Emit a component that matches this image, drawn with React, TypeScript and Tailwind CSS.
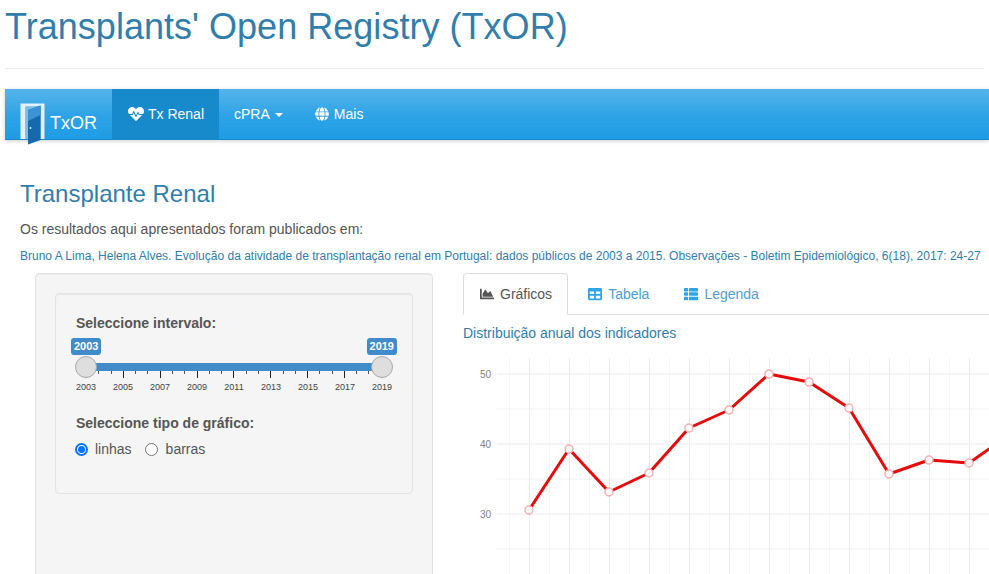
import { FaChartArea, FaGlobe, FaHeartbeat, FaTable, FaThList } from 'react-icons/fa'

const YEARS = [2003, 2005, 2007, 2009, 2011, 2013, 2015, 2017, 2019]
const PTS: [number, number][] = [
  [66, 152], [106, 91], [146, 134], [186, 115], [226, 70], [266, 52], [306, 16],
  [346, 24], [386, 50], [426, 116], [466, 102], [506, 105], [546, 77],
]

function Door() {
  return (
    <svg width="25" height="42" viewBox="0 0 25 42" className="shrink-0">
      <path d="M0.5 0.5 H24.5 V36 H20.5 V3.5 H5.5 V36 H0.5 Z" fill="#e4f1fa" />
      <path d="M5.5 3.5 H20.5 V36 H5.5 Z" fill="#7fbde8" />
      <path d="M8 7 L20.5 2.5 V37 L8 41.5 Z" fill="#1569ad" />
      <path d="M8 7 L20.5 2.5 V12 L8 18 Z" fill="#3b93d6" />
      <circle cx="10.5" cy="25" r="0.9" fill="#e6f6ff" />
    </svg>
  )
}

function NavItem({ active, children }: { active?: boolean; children: React.ReactNode }) {
  return (
    <a className={`flex items-center h-full px-[15px] text-[14px] text-white ${active ? 'bg-[#178acc]' : ''}`}>
      <span className="flex items-center">{children}</span>
    </a>
  )
}

function RangeSlider() {
  return (
    <div className="mt-[5px] w-[326px] -ml-[5px]">
      <div className="flex justify-between">
        <span className="bg-[#428bca] text-white text-[11px] leading-[13px] font-bold px-[3px] py-[2px] rounded-[3px]">2003</span>
        <span className="bg-[#428bca] text-white text-[11px] leading-[13px] font-bold px-[3px] py-[2px] rounded-[3px]">2019</span>
      </div>
      <div className="relative h-[16px]">
        <div className="mx-[15px] relative top-[8px] h-[8px] bg-[#428bca]" />
        <span className="absolute left-[4px] top-[1px] w-[22px] h-[22px] rounded-full bg-[#dedede] border border-[#aaaaaa]" />
        <span className="absolute right-[4px] top-[1px] w-[22px] h-[22px] rounded-full bg-[#dedede] border border-[#aaaaaa]" />
      </div>
      <div className="mx-[15px] h-[7px] flex justify-between">
        {Array.from({ length: 25 }).map((_, i) => (
          <span key={i} className={`w-px ${i % 3 === 0 ? 'h-[7px] bg-[#222222]' : 'h-[3px] bg-[#555555]'}`} />
        ))}
      </div>
      <div className="-mx-[1px] flex justify-between text-[9px] leading-[12px] text-[#444444] mt-[3px]">
        {YEARS.map(y => <span key={y} className="w-[32px] text-center">{y}</span>)}
      </div>
    </div>
  )
}

function Chart() {
  const line = PTS.map(p => p.join(',')).join(' ')
  return (
    <svg width="526" height="216" className="block mt-[15px]" style={{ fontFamily: '"Liberation Sans", sans-serif' }}>
      {[16, 86, 156].map(y => <line key={y} x1="34" x2="526" y1={y} y2={y} stroke="#ebebeb" />)}
      {[51, 121, 191].map(y => <line key={y} x1="34" x2="526" y1={y} y2={y} stroke="#f3f3f3" />)}
      {Array.from({ length: 13 }).map((_, i) => (
        <line key={i} x1={66.5 + i * 40} x2={66.5 + i * 40} y1="0" y2="216" stroke="#ebebeb" />
      ))}
      {Array.from({ length: 13 }).map((_, i) => (
        <line key={i} x1={46.5 + i * 40} x2={46.5 + i * 40} y1="0" y2="216" stroke="#f5f5f5" />
      ))}
      <text x="28" y="19.5" textAnchor="end" fontSize="10" fill="#7f7f7f">50</text>
      <text x="28" y="89.5" textAnchor="end" fontSize="10" fill="#7f7f7f">40</text>
      <text x="28" y="159.5" textAnchor="end" fontSize="10" fill="#7f7f7f">30</text>
      <polyline points={line} fill="none" stroke="#e60a0a" strokeWidth="3" strokeLinejoin="round" />
      {PTS.map(([x, y]) => (
        <circle key={x} cx={x} cy={y} r="4" fill="#fff8f8" stroke="#f7aeb0" strokeWidth="1.4" />
      ))}
    </svg>
  )
}

export default function App() {
  return (
    <div className="h-[574px] overflow-hidden bg-white px-[5px] text-[#555555] font-['Liberation_Sans',Arial,sans-serif]">
      <h1 className="text-[36px] leading-[40px] text-[#317eac] pt-[7px] tracking-[0.03px]">Transplants' Open Registry (TxOR)</h1>
      <div className="mt-[21px] border-t border-[#eeeeee]" />

      <nav className="mt-[20px] h-[51px] flex w-[calc(100%+5px)] bg-gradient-to-b from-[#54b4eb] via-[#2fa4e7] to-[#1d9ce5] shadow-[0_1px_4px_rgba(0,0,0,0.2)] border-b border-[#178acc]">
        <div className="w-[107px] flex items-end pl-[15px]">
          <span className="relative top-[6px] flex items-end">
            <Door />
            <span className="text-[18px] leading-[20px] text-white ml-[5px] mb-[12px]">TxOR</span>
          </span>
        </div>
        <NavItem active><FaHeartbeat className="w-[16px] h-[16px] ml-[1px] mr-[4px]" />Tx Renal</NavItem>
        <NavItem>cPRA<span className="ml-[5px] mt-[2px] border-x-[4px] border-x-transparent border-t-[4px] border-t-white" /></NavItem>
        <NavItem><FaGlobe className="w-[14px] h-[14px] ml-[2px] mr-[5px]" />Mais</NavItem>
      </nav>

      <main className="px-[15px]">
        <h3 className="mt-[40px] text-[24px] leading-[28px] text-[#317eac]">Transplante Renal</h3>
        <p className="mt-[11px] text-[14px] leading-[20px] text-[#555555]">Os resultados aqui apresentados foram publicados em:</p>
        <p className="mt-[9px] text-[12px] leading-[17px] text-[#317eac] whitespace-nowrap">
          Bruno A Lima, Helena Alves. Evolução da atividade de transplantação renal em Portugal: dados públicos de 2003 a 2015. Observações - Boletim Epidemiológico, 6(18), 2017: 24-27
        </p>

        <div className="mt-[8px] flex gap-[30px]">
          <aside className="ml-[15px] w-[398px] shrink-0 h-[400px] p-[19px] bg-[#f5f5f5] border border-[#e3e3e3] rounded-[4px] shadow-[inset_0_1px_1px_rgba(0,0,0,0.05)]">
            <div className="h-[201px] px-[20px] pt-[19px] bg-[#f5f5f5] border border-[#e3e3e3] rounded-[4px] shadow-[inset_0_1px_1px_rgba(0,0,0,0.05)]">
              <label className="block text-[14px] leading-[20px] font-bold">Seleccione intervalo:</label>
              <RangeSlider />
              <label className="block mt-[20px] text-[14px] leading-[20px] font-bold">Seleccione tipo de gráfico:</label>
              <div className="mt-[6px] flex items-center text-[14px] leading-[20px]">
                <span className="w-[13px] h-[13px] rounded-full border-2 border-[#0075ff] flex items-center justify-center bg-white -ml-[1px]">
                  <span className="w-[7px] h-[7px] rounded-full bg-[#0075ff]" />
                </span>
                <span className="ml-[7px]">linhas</span>
                <span className="ml-[13px] w-[13px] h-[13px] rounded-full border border-[#767676] bg-white" />
                <span className="ml-[8px]">barras</span>
              </div>
            </div>
          </aside>

          <section className="flex-1 min-w-0">
            <div className="flex h-[42px] border-b border-[#dddddd] text-[14px] -mr-[20px]">
              <a className="flex items-center h-[42px] pl-[16px] pr-[15px] bg-white border border-[#dddddd] border-b-white rounded-t-[4px] text-[#555555]">
                <FaChartArea className="w-[14px] h-[14px] mr-[6px]" />Gráficos
              </a>
              <a className="flex items-center pt-[1px] px-[20px] text-[#4d9ed1]">
                <FaTable className="w-[14px] h-[14px] mr-[6px] text-[#2fa4e7]" />Tabela
              </a>
              <a className="flex items-center pt-[1px] px-[15px] text-[#4d9ed1]">
                <FaThList className="w-[14px] h-[14px] mr-[6px] text-[#2fa4e7]" />Legenda
              </a>
            </div>
            <h4 className="mt-[8px] text-[14px] leading-[20px] text-[#317eac]">Distribuição anual dos indicadores</h4>
            <Chart />
          </section>
        </div>
      </main>
    </div>
  )
}
